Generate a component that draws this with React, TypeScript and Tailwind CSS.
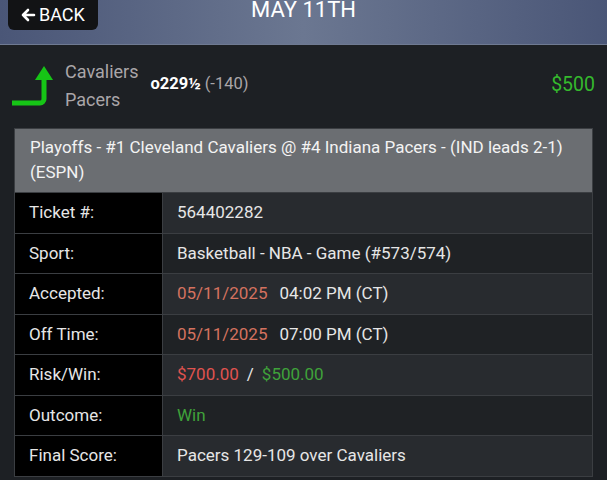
import React from "react";

const rows: { label: string; value: React.ReactNode }[] = [
  { label: "Ticket #:", value: "564402282" },
  { label: "Sport:", value: "Basketball - NBA - Game (#573/574)" },
  {
    label: "Accepted:",
    value: (
      <>
        <span className="text-[#d4725f]">05/11/2025</span>
        <span className="ml-3">04:02 PM (CT)</span>
      </>
    ),
  },
  {
    label: "Off Time:",
    value: (
      <>
        <span className="text-[#d4725f]">05/11/2025</span>
        <span className="ml-3">07:00 PM (CT)</span>
      </>
    ),
  },
  {
    label: "Risk/Win:",
    value: (
      <>
        <span className="text-[#e0534f]">$700.00</span>
        <span className="mx-2">/</span>
        <span className="text-[#3fa23a]">$500.00</span>
      </>
    ),
  },
  { label: "Outcome:", value: <span className="text-[#3fa23a]">Win</span> },
  { label: "Final Score:", value: "Pacers 129-109 over Cavaliers" },
];

export default function App() {
  return (
    <div className="w-[607px] h-[480px] overflow-hidden bg-[#1d2024] font-['Roboto',sans-serif]">
      {/* top bar */}
      <div className="relative h-[45px] border-b border-[#6f7a92] bg-[linear-gradient(90deg,#4a5677_0%,#6b7791_50%,#4a5677_100%)]">
        <div className="absolute left-[8px] top-0 flex h-[30px] w-[90px] items-center gap-[3px] rounded-b-md bg-[#121315] pl-[12px] text-[18px] leading-none text-white">
          <svg width="16" height="16" viewBox="0 0 16 16" fill="none" stroke="white" strokeWidth="2.6" strokeLinecap="round" strokeLinejoin="round">
            <path d="M14 8H3M8 3L3 8l5 5" />
          </svg>
          <span>BACK</span>
        </div>
        <div className="flex h-[20px] items-center justify-center text-[22px] leading-none text-white">
          MAY 11TH
        </div>
      </div>

      {/* bet summary */}
      <div className="flex h-[82px] items-center pl-[10px] pr-[12px]">
        <svg width="44" height="44" viewBox="0 0 44 44" className="mr-[11px] mt-[2px]">
          <path d="M2 38H30a4 4 0 0 0 4-4V14" fill="none" stroke="#16c516" strokeWidth="5" strokeLinejoin="round" />
          <path d="M34 1L43 15H25Z" fill="#16c516" />
        </svg>
        <div className="flex flex-col gap-[4px] text-[18px] leading-[24px] text-[#aaa6a9]">
          <span>Cavaliers</span>
          <span>Pacers</span>
        </div>
        <div className="ml-[12px] mb-[4px] text-[16.5px]">
          <span className="font-bold text-white">o229½</span>
          <span className="ml-1 text-[#aaa6a9]">(-140)</span>
        </div>
        <div className="ml-auto mb-[2px] text-[19.5px] text-[#35b92d]">$500</div>
      </div>

      {/* details table */}
      <div className="mx-[14px] mt-[1px] border border-[#3b3e42]">
        <div className="bg-[#6b6e72] px-[15px] pt-[6px] pb-[7px] text-[17px] leading-[25px] text-[#f3f3f3]">
          Playoffs - #1 Cleveland Cavaliers @ #4 Indiana Pacers - (IND leads 2-1) (ESPN)
        </div>
        {rows.map((r, i) => (
          <div key={r.label} className="flex h-[40.5px] border-t border-[#3b3e42] text-[17px] text-[#e6e6e6]">
            <div className="flex w-[147px] items-center bg-black pl-[14px]">{r.label}</div>
            <div
              className={`flex flex-1 items-center border-l border-[#3b3e42] pl-[14px] ${
                i % 2 === 0 ? "bg-[#282b2f]" : "bg-[#1f2225]"
              }`}
            >
              {r.value}
            </div>
          </div>
        ))}
      </div>
    </div>
  );
}
